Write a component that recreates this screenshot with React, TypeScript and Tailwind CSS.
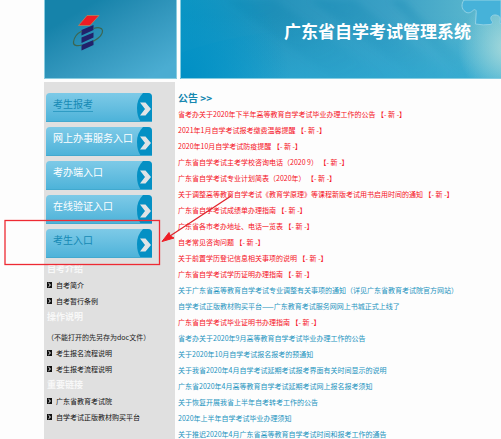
type LinkItem = { label: string; tone?: "blue" | "white" };
type Notice = { title: string; isNew?: boolean };

const ENTRIES: LinkItem[] = [
  { label: "考生报考", tone: "blue" },
  { label: "网上办事服务入口" },
  { label: "考办端入口" },
  { label: "在线验证入口" },
  { label: "考生入口", tone: "blue" },
];

const SECTIONS = [
  { title: "自考介绍", links: ["自考简介", "自考暂行条例"] },
  {
    title: "操作说明",
    note: "（不能打开的先另存为doc文件）",
    links: ["考生报名流程说明", "考生报考流程说明"],
  },
  { title: "重要链接", links: ["广东省教育考试院", "自学考试正版教材购买平台"] },
];

const NOTICES: Notice[] = [
  { title: "省考办关于2020年下半年高等教育自学考试毕业办理工作的公告", isNew: true },
  { title: "2021年1月自学考试报考缴费温馨提醒", isNew: true },
  { title: "2020年10月自学考试防疫提醒", isNew: true },
  { title: "广东省自学考试主考学校咨询电话（2020 9）", isNew: true },
  { title: "广东省自学考试专业计划简表（2020年）", isNew: true },
  { title: "关于调整高等教育自学考试《教育学原理》等课程新版考试用书启用时间的通知", isNew: true },
  { title: "广东省自学考试成绩单办理指南", isNew: true },
  { title: "广东省各市考办地址、电话一览表", isNew: true },
  { title: "自考常见咨询问题", isNew: true },
  { title: "关于前置学历登记信息相关事项的说明", isNew: true },
  { title: "广东省自学考试学历证明办理指南", isNew: true },
  { title: "关于广东省高等教育自学考试专业调整有关事项的通知（详见广东省教育考试院官方网站）" },
  { title: "自学考试正版教材购买平台——广东教育考试服务网网上书城正式上线了" },
  { title: "广东省自学考试毕业证明书办理指南", isNew: true },
  { title: "省考办关于2020年9月高等教育自学考试毕业办理工作的公告" },
  { title: "关于2020年10月自学考试报名报考的预通知" },
  { title: "关于我省2020年4月自学考试延期考试报考界面有关时间显示的说明" },
  { title: "广东省2020年4月高等教育自学考试延期考试网上报名报考须知" },
  { title: "关于恢复开展我省上半年自考转考工作的公告" },
  { title: "2020年上半年自学考试毕业办理须知" },
  { title: "关于推迟2020年4月广东省高等教育自学考试时间和报考工作的通告" },
];

function Logo() {
  return (
    <svg viewBox="0 0 32 38" className="h-[38px] w-8" aria-hidden="true">
      <path d="M6.500 11.500 15 1.500h12L18 11.500Z" fill="#ee1c24" stroke="#b98a5c" strokeWidth="0.7" />
      <g fill="#22216b">
        <path d="M9.500 16 21.500 11v5L9.500 21.500Z" />
        <path d="M9.500 23.500 21.500 18.500v5L9.500 29Z" />
        <path d="M9.500 31 21.500 26v5L9.500 36.500Z" />
      </g>
      <path
        d="M10 31C5 32.500 1 31.500 1.500 28 2 23 6 19 10 17M21.500 14.500c4.500-1.500 8.500-1 9 2 .5 4-4 8-9.500 11"
        fill="none"
        stroke="#3c6752"
        strokeWidth="1.200"
      />
    </svg>
  );
}

function Banner() {
  return (
    <svg
      viewBox="0 0 321 79"
      preserveAspectRatio="none"
      className="absolute inset-0 h-full w-full"
      aria-hidden="true"
    >
      <defs>
        <linearGradient id="sky" x1="0" y1="0" x2="1" y2="0">
          <stop offset="0" stopColor="#0f98c4" />
          <stop offset="0.3" stopColor="#2593bb" />
          <stop offset="0.65" stopColor="#3aa0c5" />
          <stop offset="1" stopColor="#62bcd0" />
        </linearGradient>
        <linearGradient id="floor" x1="0" y1="0" x2="0" y2="1">
          <stop offset="0.200" stopColor="#2ba9d3" stopOpacity="0" />
          <stop offset="1" stopColor="#2ba9d3" stopOpacity="0.7" />
        </linearGradient>
        <radialGradient id="corner" gradientUnits="userSpaceOnUse" cx="0" cy="79" r="110">
          <stop offset="0" stopColor="#008fc4" />
          <stop offset="1" stopColor="#008fc4" stopOpacity="0" />
        </radialGradient>
        <radialGradient id="glow" gradientUnits="userSpaceOnUse" cx="330" cy="48" r="52">
          <stop offset="0" stopColor="#b4dfdd" stopOpacity="0.900" />
          <stop offset="1" stopColor="#b4dfdd" stopOpacity="0" />
        </radialGradient>
        <linearGradient id="ray" x1="0" y1="0" x2="1" y2="1">
          <stop offset="0" stopColor="#0b7eab" stopOpacity="0.250" />
          <stop offset="1" stopColor="#0b7eab" stopOpacity="0" />
        </linearGradient>
        <linearGradient id="wave" x1="0" y1="0" x2="1" y2="0">
          <stop offset="0" stopColor="#0095c9" stopOpacity="0.300" />
          <stop offset="1" stopColor="#0095c9" stopOpacity="0" />
        </linearGradient>
        <filter id="soften">
          <feGaussianBlur stdDeviation="3" />
        </filter>
      </defs>
      <rect width="321" height="79" fill="url(#sky)" />
      <rect width="321" height="79" fill="url(#floor)" />
      <g filter="url(#soften)">
        <path d="M45 0h50l112 79h-52Z" fill="url(#ray)" />
        <path d="M130 0h45l100 79h-38Z" fill="url(#ray)" />
        <path d="M210 0h14l78 79h-20Z" fill="url(#ray)" />
      </g>
      <path d="M0 53Q55 34 105 31V79H0Z" fill="url(#wave)" />
      <rect width="321" height="79" fill="url(#corner)" />
      <rect width="321" height="79" fill="url(#glow)" />
      <path d="M.5 0v78.500H321" fill="none" stroke="#86cce0" />
    </svg>
  );
}

function PuzzlePiece() {
  return (
    <svg viewBox="0 0 40 28" className="absolute right-0 top-0 h-7 w-10" aria-hidden="true">
      <path
        d="M3 0C0 4 .5 9 4 11.500c3 2.500 6 1 8-1 2-1.800 3.500-.5 3.200 2L14.500 24q8 1.500 14.500.5c3-.7 3-2 1.500-4C29 18 30 15 34 15c3.500 0 6 2 5 5.500-.5 1.500-.5 3 1 3.500V0Z"
        fill="#46b2d9"
        stroke="#93d3e6"
        strokeWidth="1"
      />
    </svg>
  );
}

function EntryButton({ label, tone = "white" }: LinkItem) {
  return (
    <a
      href="#"
      className="flex h-[29px] overflow-hidden rounded-t-sm border-b border-[#42a9cf] bg-linear-to-b from-[#7dcae7] to-[#4db3d9]"
    >
      <span
        className={
          tone === "blue"
            ? "flex-1 whitespace-nowrap pl-[7px] pt-[3px] text-[10px] leading-4 text-[#1589b4]"
            : "flex-1 whitespace-nowrap pl-[7px] pt-[3px] text-[10px] leading-4 text-white"
        }
      >
        <span className={label === "考生报考" ? "border-b border-[#2f9cc4]" : ""}>{label}</span>
      </span>
      <svg viewBox="0 0 15 29" className="h-[29px] w-[15px] shrink-0" aria-hidden="true">
        <path d="M6 0Q0 6 0 15T4 29h11V0Z" fill="#0490c4" />
        <path d="M3 9.500h5.500l5.500 6.500-5.500 6.500H3L8 16Z" fill="#e0e4e6" />
      </svg>
    </a>
  );
}

function Bullet() {
  return (
    <svg viewBox="0 0 5 6" className="h-1.5 w-[5px] shrink-0" aria-hidden="true">
      <path d="M0 0h5v6H0Z" fill="#111" />
      <path d="m1.500 1.200 2 1.800-2 1.800" fill="none" stroke="#fff" />
    </svg>
  );
}

function Sidebar() {
  return (
    <aside className="w-[131px] shrink-0 bg-[#e0e0e0] pt-[11px]">
      <nav className="ml-0.5 flex w-[106px] flex-col gap-[5px]">
        {ENTRIES.map((entry) => (
          <EntryButton key={entry.label} {...entry} />
        ))}
      </nav>
      <div className="pl-[3px] pt-[3px]">
        {SECTIONS.map((section) => (
          <section key={section.title}>
            <h2 className="whitespace-nowrap text-[9px] font-bold leading-4 text-[#f8f8f8]">
              {section.title}
            </h2>
            {section.note && (
              <p className="whitespace-nowrap pt-1 text-[7px] leading-4 text-[#222]">
                {section.note}
              </p>
            )}
            <ul>
              {section.links.map((link) => (
                <li key={link}>
                  <a
                    href="#"
                    className="flex items-center gap-1 whitespace-nowrap text-[7px] leading-4 text-[#111]"
                  >
                    <Bullet />
                    {link}
                  </a>
                </li>
              ))}
            </ul>
          </section>
        ))}
      </div>
    </aside>
  );
}

function NoticeList() {
  return (
    <main className="min-w-0 flex-1 pl-[3px] pt-2">
      <h2 className="text-[10px] font-bold leading-4 text-[#1688b0]">公告 &gt;&gt;</h2>
      <ul className="flex flex-col gap-1.5 pt-[3px]">
        {NOTICES.map((notice) => (
          <li key={notice.title} className="whitespace-nowrap text-[7px] leading-[10px]">
            <a href="#" className={notice.isNew ? "block text-[#f5101c]" : "block text-[#1b93bd]"}>
              {notice.title}
              {notice.isNew && " 【- 新 -】"}
            </a>
          </li>
        ))}
      </ul>
    </main>
  );
}

// red box and arrow that point out the candidate entry
function Callout() {
  return (
    <svg
      viewBox="0 0 240 80"
      className="pointer-events-none absolute left-0 top-[190px] h-20 w-60"
      aria-hidden="true"
    >
      <rect x="5" y="30.500" width="154.500" height="44" fill="none" stroke="#ee2a33" strokeWidth="1.300" />
      <path d="M231 6 170 46" stroke="#e0242c" strokeWidth="1.300" />
      <path d="m162 51.500 7-9 1.200 3.500 3.800 2Z" fill="#ee1c24" stroke="#ee1c24" />
    </svg>
  );
}

export default function App() {
  return (
    <div className="relative flex min-h-screen flex-col overflow-hidden bg-[#fdfdfd] pl-11 font-['Noto_Sans_CJK_SC','Noto_Sans',sans-serif]">
      <header className="flex gap-[3px]">
        <div className="flex h-[79px] w-[133px] shrink-0 border border-t-0 border-[#8accdf] bg-linear-to-br from-[#1683aa] from-20% to-[#4badd2] to-90% pl-[27px] pt-3.5">
          <Logo />
        </div>
        <div className="relative h-[79px] min-w-0 flex-1 overflow-hidden">
          <Banner />
          <PuzzlePiece />
          <h1 className="relative whitespace-nowrap pl-[104px] pt-[19px] text-[17px] font-bold leading-6 text-white">
            广东省自学考试管理系统
          </h1>
        </div>
      </header>
      <div className="flex flex-1 pt-[3px]">
        <Sidebar />
        <NoticeList />
      </div>
      <Callout />
    </div>
  );
}
